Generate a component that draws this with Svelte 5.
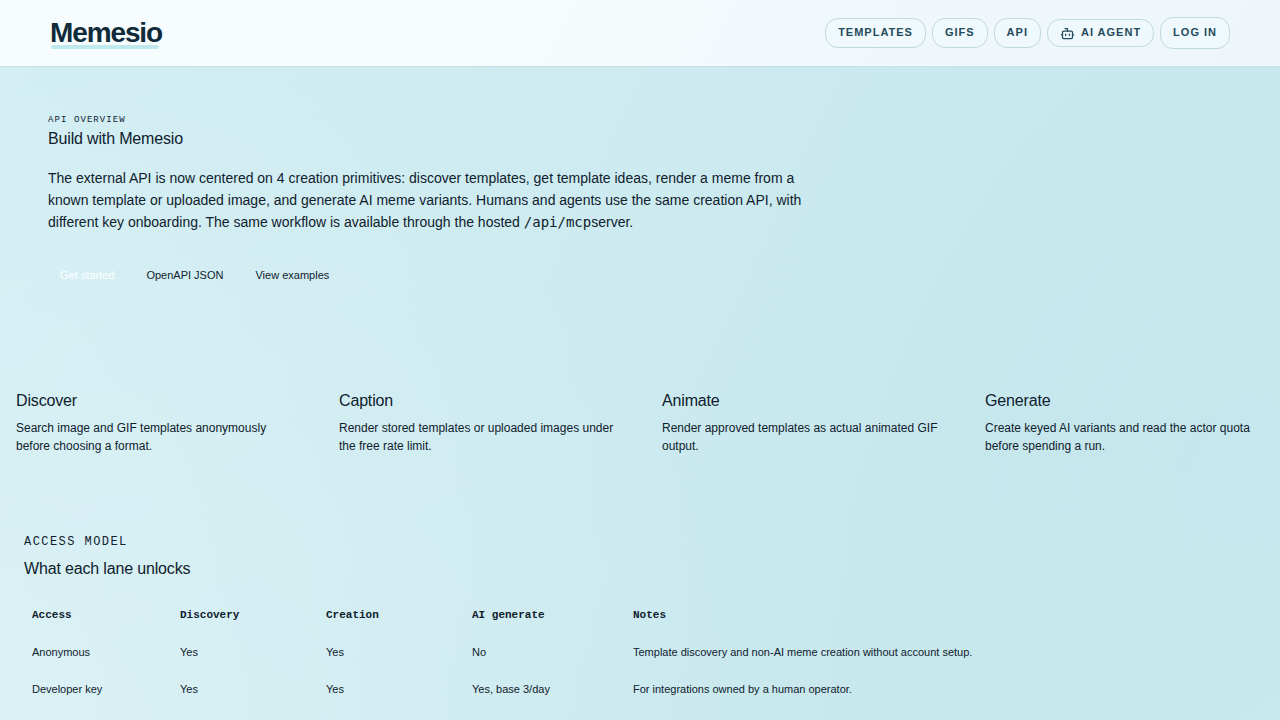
<script>
  const features = [
    { title: 'Discover', text: 'Search image and GIF templates anonymously before choosing a format.' },
    { title: 'Caption', text: 'Render stored templates or uploaded images under the free rate limit.' },
    { title: 'Animate', text: 'Render approved templates as actual animated GIF output.' },
    { title: 'Generate', text: 'Create keyed AI variants and read the actor quota before spending a run.' }
  ];

  const columns = ['Access', 'Discovery', 'Creation', 'AI generate', 'Notes'];

  const lanes = [
    ['Anonymous', 'Yes', 'Yes', 'No', 'Template discovery and non-AI meme creation without account setup.'],
    ['Developer key', 'Yes', 'Yes', 'Yes, base 3/day', 'For integrations owned by a human operator.']
  ];
</script>

<div class="page">
  <header>
    <a class="logo" href="/">Memesio</a>
    <nav>
      <a class="pill" href="/templates">Templates</a>
      <a class="pill" href="/gifs">GIFs</a>
      <a class="pill" href="/api">API</a>
      <a class="pill agent" href="/agent">
        <svg viewBox="0 0 24 24" aria-hidden="true">
          <path d="M12 8V4H8" />
          <rect x="4" y="8" width="16" height="12" rx="2" />
          <path d="M2 14h2M20 14h2M15 13v2M9 13v2" />
        </svg>
        <span>AI Agent</span>
      </a>
      <button class="pill login" type="button">Log in</button>
    </nav>
  </header>

  <main>
    <section class="hero">
      <p class="eyebrow small">API overview</p>
      <h1>Build with Memesio</h1>
      <p class="lead">
        The external API is now centered on 4 creation primitives: discover templates, get template ideas, render a
        meme from a known template or uploaded image, and generate AI meme variants. Humans and agents use the same
        creation API, with different key onboarding. The same workflow is available through the hosted
        <code>/api/mcp</code>server.
      </p>
      <div class="actions">
        <a class="primary" href="#start">Get started</a>
        <a href="/openapi.json">OpenAPI JSON</a>
        <a href="#examples">View examples</a>
      </div>
    </section>

    <section class="features">
      {#each features as feature}
        <article>
          <h2>{feature.title}</h2>
          <p>{feature.text}</p>
        </article>
      {/each}
    </section>

    <section class="access">
      <p class="eyebrow">Access model</p>
      <h2>What each lane unlocks</h2>
      <table>
        <thead>
          <tr>
            {#each columns as column}
              <th scope="col">{column}</th>
            {/each}
          </tr>
        </thead>
        <tbody>
          {#each lanes as lane}
            <tr>
              {#each lane as cell}
                <td>{cell}</td>
              {/each}
            </tr>
          {/each}
        </tbody>
      </table>
    </section>
  </main>
</div>

<style>
  :global(body) {
    font-family: "Liberation Sans", Arial, sans-serif;
    color: #10212e;
  }

  .page {
    min-height: 100vh;
    background:
      radial-gradient(circle at 0% 100%, rgba(230, 246, 249, 0.5), transparent 50%),
      radial-gradient(circle at 100% 68%, rgba(188, 226, 234, 0.35), transparent 38%),
      linear-gradient(115deg, #d2eef3 0%, #cdebf0 40%, #c8e8ed 75%, #cbeaee 100%);
  }

  a {
    color: inherit;
    text-decoration: none;
  }

  h1,
  h2,
  p {
    margin: 0;
  }

  header {
    display: flex;
    align-items: center;
    justify-content: space-between;
    height: 66px;
    padding: 0 50px;
    border-bottom: 1px solid #c9dfe6;
    background: linear-gradient(120deg, #f7fdff 0%, #f5fcfe 40%, #eff7fb 75%, #eef6fa 100%);
  }

  .logo {
    position: relative;
    font-size: 28px;
    font-weight: 700;
    line-height: 32px;
    letter-spacing: -0.04em;
    color: #0f2a38;
  }

  .logo::after {
    content: "";
    position: absolute;
    left: 1px;
    right: 3px;
    bottom: 0;
    height: 4px;
    border-radius: 2px;
    background: #c0e9ee;
  }

  nav {
    display: flex;
    align-items: center;
    gap: 6px;
  }

  .pill {
    box-sizing: border-box;
    height: 30px;
    padding: 0 12px 2px;
    display: flex;
    align-items: center;
    border: 1px solid #bfd9e1;
    border-radius: 13px;
    background: rgba(240, 250, 253, 0.5);
    color: #244b5c;
    font-family: inherit;
    font-size: 11px;
    font-weight: 700;
    letter-spacing: 1px;
    text-transform: uppercase;
  }

  .agent {
    height: 28px;
    gap: 6px;
  }

  .agent svg {
    width: 15px;
    height: 15px;
    margin-top: 2px;
    fill: none;
    stroke: currentColor;
    stroke-width: 2;
    stroke-linecap: round;
    stroke-linejoin: round;
  }

  .login {
    height: 32px;
    cursor: pointer;
  }

  .hero {
    padding: 46px 48px 0;
  }

  .eyebrow {
    font-family: "Liberation Mono", monospace;
    font-size: 12px;
    line-height: 16px;
    letter-spacing: 0.12em;
    text-transform: uppercase;
  }

  .eyebrow.small {
    font-size: 9px;
    line-height: 14px;
  }

  h1,
  h2 {
    font-size: 16px;
    font-weight: 400;
    line-height: 24px;
    letter-spacing: -0.01em;
  }

  .lead {
    max-width: 768px;
    margin-top: 16px;
    font-size: 14px;
    line-height: 22px;
  }

  code {
    font-family: "DejaVu Sans Mono", monospace;
    font-size: 14px;
    line-height: 16px;
  }

  .actions {
    display: flex;
    gap: 8px;
    margin-top: 26px;
    font-size: 11px;
    line-height: 16px;
  }

  .actions a {
    padding: 8px 12px;
  }

  .primary {
    color: #fff;
  }

  .features {
    display: grid;
    grid-template-columns: repeat(4, 1fr);
    gap: 12px;
    margin-top: 82px;
  }

  .features article {
    padding: 16px;
  }

  .features p {
    margin-top: 6px;
    font-size: 12px;
    line-height: 18px;
  }

  .access {
    padding: 63px 24px 0;
  }

  .access h2 {
    margin-top: 7px;
  }

  table {
    width: 100%;
    margin-top: 16px;
    border-collapse: collapse;
    table-layout: fixed;
    font-size: 11px;
    line-height: 21px;
    text-align: left;
  }

  th,
  td {
    padding: 8px;
  }

  th {
    width: 130px;
    font-family: "Liberation Mono", monospace;
    font-weight: 700;
  }

  th:first-child {
    width: 132px;
  }

  th:nth-child(4) {
    width: 145px;
  }

  th:last-child {
    width: auto;
  }
</style>
